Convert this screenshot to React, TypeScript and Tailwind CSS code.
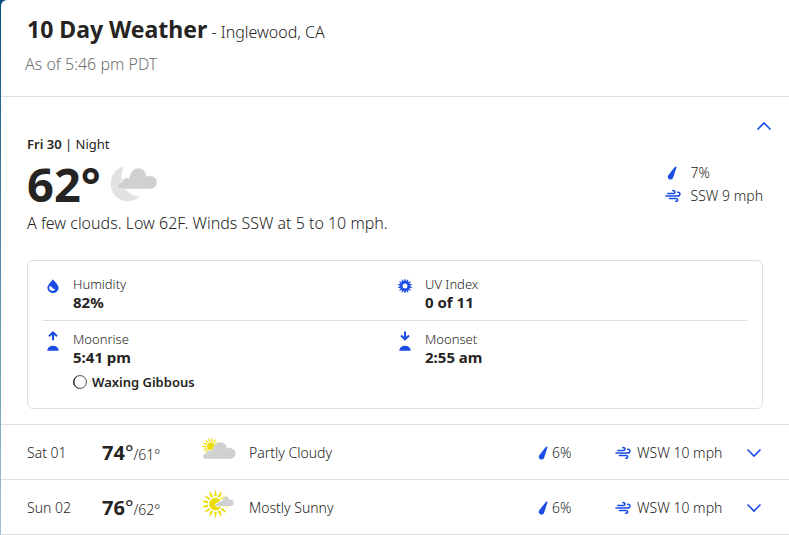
import type { ReactNode } from "react";

type Day = {
  date: string;
  high: number;
  low: number;
  condition: string;
  icon: ReactNode;
  precip: string;
  wind: string;
};

function Chevron({ up = false }: { up?: boolean }) {
  return (
    <svg viewBox="0 0 16 10" className="w-[16px] h-[10px]" fill="none" stroke="#1b4de4" strokeWidth="1.6" aria-hidden="true">
      <path d={up ? "M1.500 8.500 8 2 14.500 8.500" : "M1.500 1.500 8 8 14.500 1.500"} />
    </svg>
  );
}

function DropIcon() {
  return (
    <svg viewBox="0 0 10 14" className="w-[10px] h-[14px] shrink-0" fill="#1b4de4" aria-hidden="true">
      <path d="M9.500 1.200 6.200 11.500C5.600 13.400 3.600 13.900 2.200 13.200.8 12.500.3 10.800 1.300 9.300L7.600 1.200C8.300.300 9.800.200 9.500 1.200Z" />
    </svg>
  );
}

function WindIcon() {
  return (
    <svg
      viewBox="0 0 16 14"
      className="w-[16px] h-[14px] shrink-0"
      fill="none"
      stroke="#1b4de4"
      strokeWidth="1.6"
      strokeLinecap="round"
      aria-hidden="true"
    >
      <path d="M2.800 4.500H8.400C10.500 4.500 10.300 1.300 8 1.600" />
      <path d="M1 7H12.800C15.700 7 15.600 3 12.700 3.300" />
      <path d="M4.500 9.500H11C13.300 9.500 13.200 12.600 10.800 12.300" />
    </svg>
  );
}

function HumidityIcon() {
  return (
    <svg viewBox="0 0 12 14" className="w-[12px] h-[14px] mt-[3px]" aria-hidden="true">
      <path d="M6 .2C7 2.200 11.600 5.600 11.600 8.700A5.600 5.200 0 0 1 .4 8.700C.4 5.600 5 2.200 6 .2Z" fill="#1b4de4" />
      <path d="M2.400 7.400C3.600 7 4.500 7.600 5.100 8.500 5.800 9.500 7 10 8.300 10.200 7.100 12.100 4.600 12.200 3.200 10.900 2.200 9.900 2 8.600 2.400 7.400Z" fill="#fff" />
    </svg>
  );
}

function UvIcon() {
  const angles = Array.from({ length: 14 }, (_, i) => (i * 360) / 14);
  return (
    <svg viewBox="-7 -7 14 14" className="w-[14px] h-[14px] mt-[3px]" aria-hidden="true">
      <circle r="3.600" fill="none" stroke="#1b4de4" strokeWidth="2.200" />
      {angles.map((a) => (
        <path key={a} d="M-1.200-4.200-.4-7H.4L1.200-4.200Z" fill="#1b4de4" transform={`rotate(${a})`} />
      ))}
    </svg>
  );
}

function MoonIcon({ set = false }: { set?: boolean }) {
  return (
    <svg viewBox="0 0 12 20" className="w-[12px] h-[20px]" fill="none" aria-hidden="true">
      <path
        d={set ? "M6 .5V8M2 4.500 6 8.300 10 4.500" : "M6 9.200V1.700M2 5.200 6 1.400 10 5.200"}
        stroke="#1b4de4"
        strokeWidth="2"
      />
      <path d="M.3 19.800C.5 13 11.500 13 11.700 19.800Z" fill="#1b4de4" />
    </svg>
  );
}

function PhaseIcon() {
  return (
    <svg viewBox="0 0 14 14" className="w-[14px] h-[14px]" aria-hidden="true">
      <circle cx="7" cy="7" r="6.400" fill="#fff" stroke="#252422" strokeWidth=".8" />
      <path d="M7 .3A6.700 6.700 0 0 0 7 13.700C-.3 12.500-.3 1.500 7 .3Z" fill="#252422" />
    </svg>
  );
}

function NightCloudIcon() {
  return (
    <svg viewBox="0 0 48 38" className="w-[48px] h-[38px]" aria-hidden="true">
      <path d="M14 1.500C8 12 12.500 31 30 31.500 23.500 37.500 12 38 5.500 31.500-3.500 22 .5 4.500 14 1.500Z" fill="#e2e2e2" />
      <path
        d="M11 24C5.500 24 6 17.500 11.500 17.200 12.500 13.500 16 12 19 13.200 22-1.500 36 1.500 36.500 11.300 43 9.500 47 13 47 17 47 21 44 24 40 24Z"
        fill="#d0d0d0"
        stroke="#fff"
        strokeWidth=".5"
      />
    </svg>
  );
}

function PartlyCloudyIcon() {
  return (
    <svg viewBox="0 0 34 22" className="w-[34px] h-[22px]" aria-hidden="true">
      <g transform="translate(9 8.500)" fill="#ebdc0b">
        <circle r="4" />
        {[130, 155, 180, 205, 230, 255, 280, 305, 330].map((a) => (
          <path key={a} d="M4.900-.9 8.700-.3V.3L4.900.9Z" transform={`rotate(${a})`} />
        ))}
      </g>
      <path
        d="M4 21C-.5 21 0 15.700 4.500 15.500 5.500 12.300 8.500 11.800 10.300 12.500 13 .5 24.500 3.500 25 10 30.500 9 33.700 12 33.700 15.500 33.700 18.800 31 21 28 21Z"
        fill="#d0d0d0"
        stroke="#fff"
        strokeWidth=".4"
      />
    </svg>
  );
}

function MostlySunnyIcon() {
  const rays = Array.from({ length: 14 }, (_, i) => (i * 360) / 14);
  return (
    <svg viewBox="0 0 34 28" className="w-[34px] h-[28px]" aria-hidden="true">
      <g transform="translate(13.500 14)" fill="#ebdc0b">
        <circle r="6.300" />
        {rays.map((a) => (
          <path key={a} d="M-1.300-7.700-.5-13.500H.5L1.300-7.700Z" transform={`rotate(${a})`} />
        ))}
      </g>
      <path
        d="M15.500 16.500C12.500 16.500 13 13 16 12.900 16.500 11 18.500 10.500 20 11.200 21.500 4 27.500 5.500 27.500 9.500 30.500 8.800 32.500 10.800 32 13.500 31.700 15.500 30.500 16.500 28.500 16.500Z"
        fill="#d0d0d0"
        stroke="#fff"
        strokeWidth=".8"
      />
    </svg>
  );
}

const days: Day[] = [
  { date: "Sat 01", high: 74, low: 61, condition: "Partly Cloudy", icon: <PartlyCloudyIcon />, precip: "6%", wind: "WSW 10 mph" },
  { date: "Sun 02", high: 76, low: 62, condition: "Mostly Sunny", icon: <MostlySunnyIcon />, precip: "6%", wind: "WSW 10 mph" },
];

function Detail({ icon, label, value, children }: { icon: ReactNode; label: string; value: string; children?: ReactNode }) {
  return (
    <div className="flex">
      <div className="w-[30px] shrink-0">
        <div className="w-5 flex justify-center">{icon}</div>
      </div>
      <div>
        <div className="text-[13px] leading-[17px]">{label}</div>
        <div className="text-[15px] leading-[18px] font-bold">{value}</div>
        {children}
      </div>
    </div>
  );
}

function DayRow({ day }: { day: Day }) {
  return (
    <li className="flex items-center h-[55px] pt-px pl-[26px] pr-[27px] border-b border-[#dedede] text-[14px]">
      <div className="w-[75px]">{day.date}</div>
      <div className="w-[100px] flex items-baseline">
        <span className="text-[20px] font-bold">{day.high}</span>
        <span className="text-[20px] font-normal">°</span>
        <span>/{day.low}°</span>
      </div>
      <div className="w-[47px] pb-[7px]">{day.icon}</div>
      <div className="flex-1">{day.condition}</div>
      <div className="w-[77px] flex items-center gap-1">
        <DropIcon />
        {day.precip}
      </div>
      <div className="w-[131px] flex items-center gap-[6px]">
        <WindIcon />
        {day.wind}
      </div>
      <button type="button" aria-label={`Show ${day.date}`}>
        <Chevron />
      </button>
    </li>
  );
}

export default function App() {
  return (
    <div className="min-h-screen pl-px bg-linear-to-b from-[#00507f] to-[#9fc5d3] font-['Noto_Sans',sans-serif] font-light text-[#252422]">
      <main className="min-h-screen bg-white rounded-tl-[6px]">
        <header className="h-[97px] pt-[13px] border-b border-[#dedede]">
          <h1 className="pl-[26px] leading-8">
            <span className="text-[23px] font-bold">10 Day Weather</span>
            <span className="text-[16px]"> - Inglewood, CA</span>
          </h1>
          <p className="pl-6 pt-1 text-[16px] leading-6 text-[#6f6f6f]">As of 5:46 pm PDT</p>
        </header>

        <section className="px-[26px] pb-[15px] border-b border-[#dedede]">
          <div className="flex justify-end h-[38px] pt-[24px] -mr-[9px]">
            <button type="button" className="flex h-[10px]" aria-label="Hide details">
              <Chevron up />
            </button>
          </div>
          <div className="flex justify-between">
            <div>
              <h2 className="text-[13px] leading-[18px] font-normal">
                <span className="font-semibold">Fri 30</span> | Night
              </h2>
              <div className="flex items-center gap-[9px] h-[62px]">
                <span className="text-[47px] leading-none font-bold">62°</span>
                <NightCloudIcon />
              </div>
              <p className="text-[16px] leading-4">A few clouds. Low 62F. Winds SSW at 5 to 10 mph.</p>
            </div>
            <div className="pt-[26px] text-[14px] leading-[23px]">
              <div className="flex items-center">
                <span className="w-[26px] pl-[2px]"><DropIcon /></span>7%
              </div>
              <div className="flex items-center">
                <span className="w-[26px]"><WindIcon /></span>SSW 9 mph
              </div>
            </div>
          </div>

          <div className="mt-[29px] px-[15px] pt-[15px] pb-4 border border-[#dedede] rounded-md">
            <div className="grid grid-cols-2 pb-[9px] border-b border-[#dedede]">
              <Detail icon={<HumidityIcon />} label="Humidity" value="82%" />
              <Detail icon={<UvIcon />} label="UV Index" value="0 of 11" />
            </div>
            <div className="grid grid-cols-2 pt-[10px]">
              <Detail icon={<MoonIcon />} label="Moonrise" value="5:41 pm">
                <div className="flex items-center gap-[5px] pt-[6px] text-[13px] leading-5 font-semibold">
                  <PhaseIcon />
                  Waxing Gibbous
                </div>
              </Detail>
              <Detail icon={<MoonIcon set />} label="Moonset" value="2:55 am" />
            </div>
          </div>
        </section>

        <ul>
          {days.map((day) => (
            <DayRow key={day.date} day={day} />
          ))}
        </ul>
      </main>
    </div>
  );
}
